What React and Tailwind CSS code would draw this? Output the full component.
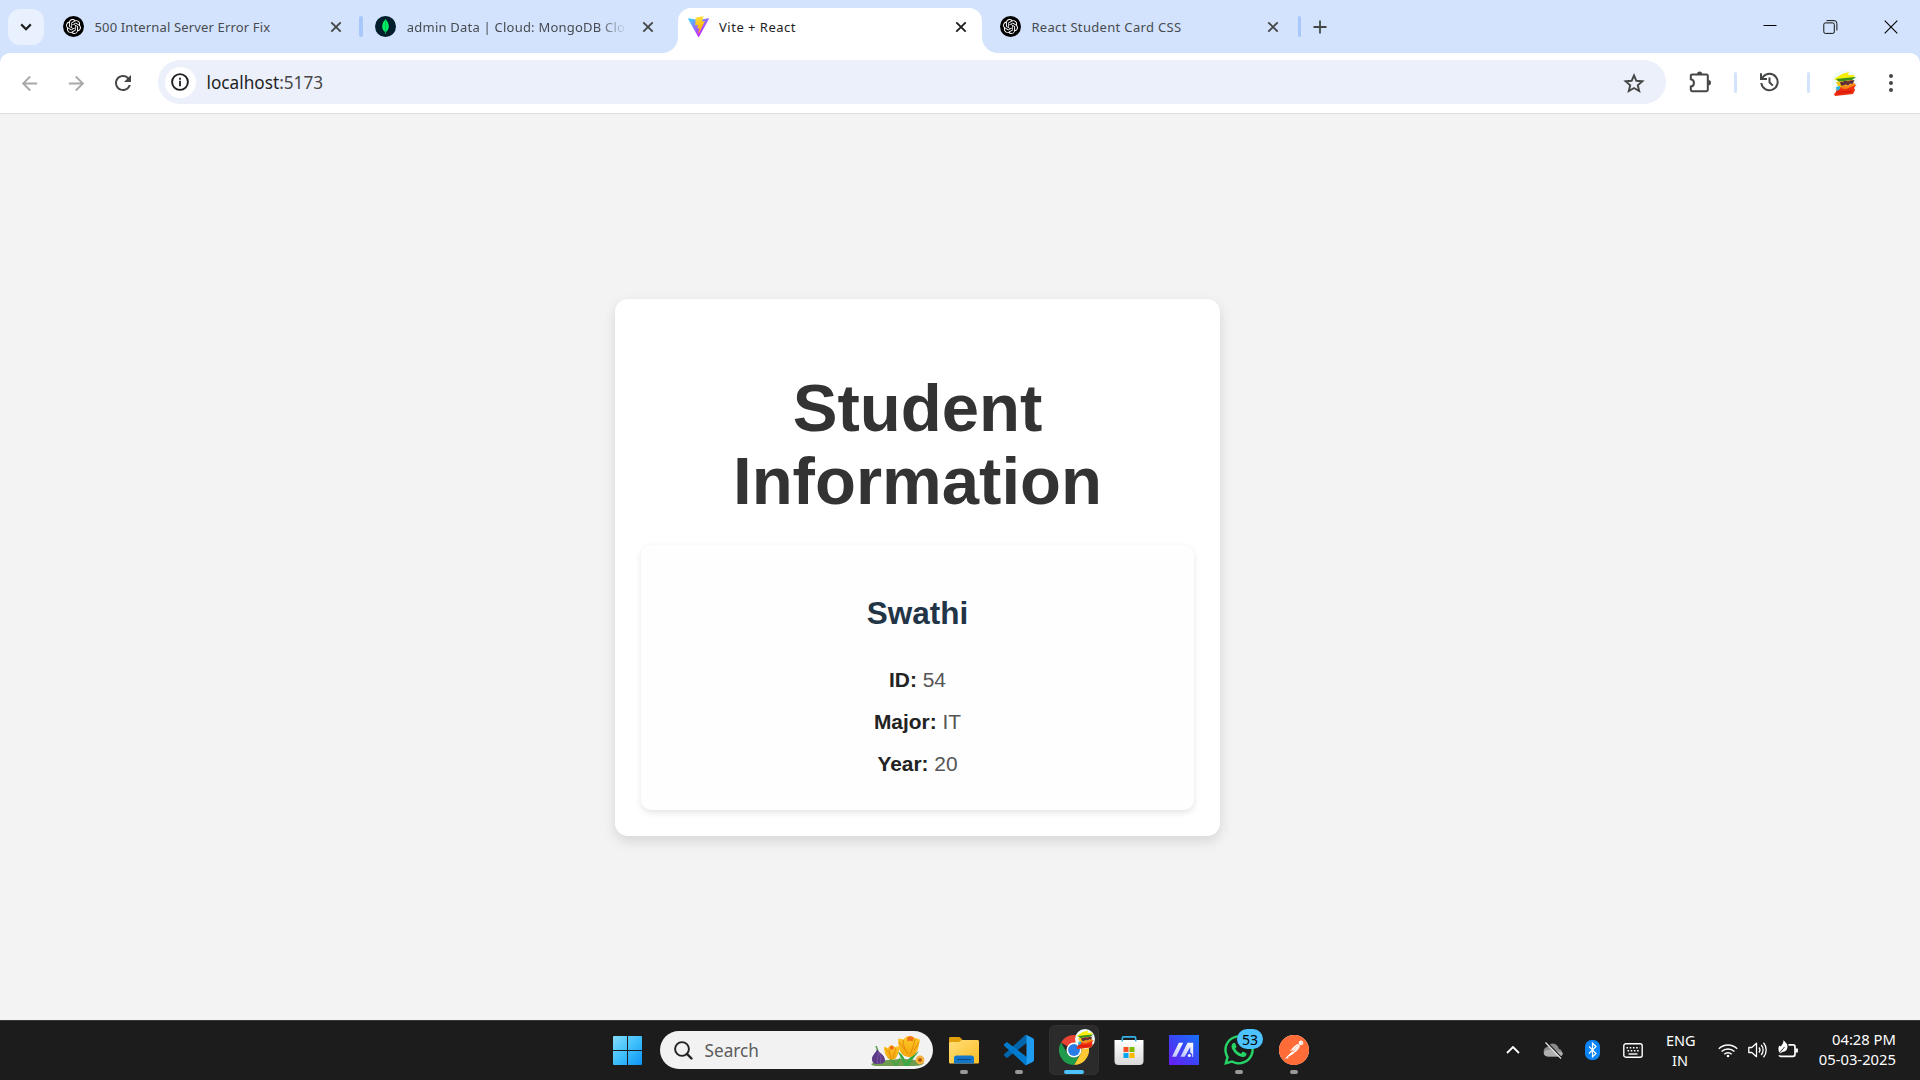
import React from "react";
import { SiOpenai, SiPostman } from "react-icons/si";
import { FaWhatsapp } from "react-icons/fa";
import { MdArrowBack, MdArrowForward, MdRefresh } from "react-icons/md";

function OpenAIMark() {
  return (
    <span className="flex size-[21px] items-center justify-center rounded-full bg-black">
      <SiOpenai className="size-[15px] text-white" />
    </span>
  );
}

function MongoMark() {
  return (
    <svg viewBox="0 0 21 21" className="size-[21px]">
      <circle cx="10.5" cy="10.5" r="10.5" fill="#001e2b" />
      <path d="M10.5 3C12.2 5.3 13.800 7.2 13.800 10.2c0 2.7-1.300 4.600-2.900 5.800l-.2 2h-.4l-.2-2C8.500 14.800 7.200 12.900 7.200 10.200 7.200 7.200 8.800 5.300 10.500 3Z" fill="#00ed64" />
      <path d="M10.500 4v14" stroke="#00a848" strokeWidth=".6" />
    </svg>
  );
}

function ViteMark() {
  return (
    <svg viewBox="0 0 256 257" className="size-[21px]">
      <defs>
        <linearGradient id="viteA" x1="-.828%" x2="57.636%" y1="7.652%" y2="78.411%">
          <stop offset="0%" stopColor="#41D1FF" />
          <stop offset="100%" stopColor="#BD34FE" />
        </linearGradient>
        <linearGradient id="viteB" x1="43.376%" x2="50.316%" y1="2.242%" y2="89.03%">
          <stop offset="0%" stopColor="#FFEA83" />
          <stop offset="8.333%" stopColor="#FFDD35" />
          <stop offset="100%" stopColor="#FFA800" />
        </linearGradient>
      </defs>
      <path fill="url(#viteA)" d="M255.153 37.938L134.897 252.976c-2.483 4.440-8.862 4.466-11.382.048L.875 37.958c-2.746-4.814 1.371-10.646 6.827-9.670l120.385 21.517a6.537 6.537 0 0 0 2.322-.004l117.867-21.483c5.438-.991 9.574 4.796 6.877 9.620Z" />
      <path fill="url(#viteB)" d="M185.432.063L96.440 17.501a3.268 3.268 0 0 0-2.634 3.014l-5.474 92.456a3.268 3.268 0 0 0 3.997 3.378l24.777-5.718c2.318-.535 4.413 1.507 3.936 3.838l-7.361 36.047c-.495 2.426 1.782 4.500 4.151 3.780l15.304-4.649c2.372-.720 4.652 1.360 4.150 3.788l-11.698 56.621c-.732 3.542 3.979 5.473 5.943 2.437l1.313-2.028l72.516-144.720c1.215-2.423-.880-5.186-3.540-4.672l-25.505 4.922c-2.396.462-4.435-1.770-3.759-4.114l16.646-57.705c.677-2.350-1.370-4.583-3.769-4.113Z" />
    </svg>
  );
}

function CloseX({ dark }) {
  return (
    <svg viewBox="0 0 12 12" className={dark ? "size-3 text-[#1f1f1f]" : "size-3 text-[#444746]"}>
      <path d="M1.300 1.300l9.400 9.400M10.700 1.300l-9.400 9.400" stroke="currentColor" strokeWidth="1.900" fill="none" />
    </svg>
  );
}

function Tab({ icon, title, active, fade, track }) {
  return (
    <div className="relative h-[53px] w-[312.3px] shrink-0">
      {active && (
        <div className="absolute inset-x-1 top-2 bottom-0 rounded-t-[13px] bg-white">
          <div className="absolute bottom-0 -left-4 size-4 bg-[radial-gradient(circle_at_0_0,transparent_15.5px,white_16.5px)]" />
          <div className="absolute -right-4 bottom-0 size-4 bg-[radial-gradient(circle_at_100%_0,transparent_15.5px,white_16.5px)]" />
        </div>
      )}
      <div className="relative flex h-[53px] items-center pl-[14px]">
        {icon}
        <div
          className={
            "ml-[10.5px] w-[218.5px] overflow-hidden text-[13px] leading-5 whitespace-nowrap " +
            track +
            (active ? " text-[#1f1f1f]" : " text-[#474b50]") +
            (fade ? " [mask-image:linear-gradient(to_right,black_88%,transparent_101%)]" : "")
          }
        >
          {title}
        </div>
        <div className="ml-[17px] flex w-3">
          <CloseX dark={active} />
        </div>
      </div>
    </div>
  );
}

function TabStrip() {
  return (
    <div className="relative flex h-[53px] items-center bg-[#d3e3fd]">
      <div className="ml-2 flex size-9 items-center justify-center rounded-xl bg-[#e9f1fe]">
        <svg viewBox="0 0 12 8" className="h-2 w-3">
          <path d="M1.200 1.400L6 6.200l4.800-4.800" stroke="#1f1f1f" strokeWidth="2.200" fill="none" />
        </svg>
      </div>
      <div className="ml-[5px] flex">
        <Tab icon={<OpenAIMark />} title="500 Internal Server Error Fix" track="tracking-[0.15px]" />
        <Tab icon={<MongoMark />} title="admin Data | Cloud: MongoDB Clo" fade track="tracking-[0.22px]" />
        <Tab icon={<ViteMark />} title="Vite + React" active track="tracking-[0.48px]" />
        <Tab icon={<OpenAIMark />} title="React Student Card CSS" track="tracking-[0.33px]" />
      </div>
      <div className="absolute top-4 left-[359px] h-[21px] w-1 rounded-sm bg-[#a8c7fa]" />
      <div className="-ml-[0.7px] h-[21px] w-[3px] rounded-sm bg-[#a8c7fa]" />
      <svg viewBox="0 0 14 14" className="ml-[12.500px] size-[14px]">
        <path d="M7 .5v13M.5 7h13" stroke="#444746" strokeWidth="1.800" />
      </svg>
      <div className="ml-auto flex h-[53px] items-center">
        <svg viewBox="0 0 14 14" className="mr-[46px] size-[14px]">
          <path d="M.5 5.500h13" stroke="#000" />
        </svg>
        <svg viewBox="0 0 15 14" className="mr-[46px] h-[14px] w-[15px]" fill="none" stroke="#111">
          <rect x=".8" y="2.900" width="10.500" height="10.500" rx="1.500" />
          <path d="M3.500.6h7.500a2.900 2.900 0 0 1 2.900 2.900v7" />
        </svg>
        <svg viewBox="0 0 14 14" className="mr-[22.5px] size-[14px]">
          <path d="M.7.7l12.600 12.600M13.300.7L.7 13.300" stroke="#000" strokeWidth="1.100" />
        </svg>
      </div>
    </div>
  );
}

/* Profile picture: a colourful scribble clipped to a circle. */
function Avatar({ className }) {
  return (
    <svg viewBox="0 0 26 26" className={className}>
      <circle cx="13" cy="13" r="13" fill="#effafc" />
      <path d="M2 9l8-5 7-2-1 3 7 0-3 4-14 2z" fill="#f7ee08" />
      <path d="M4 9l9-1 11-1-4 3-13 2z" fill="#3c8f1b" />
      <path d="M4 12l17-2 1 3-15 5z" fill="#f5c811" />
      <path d="M8 12l13-2 0 3-12 3z" fill="#7b3a20" />
      <path d="M9 12l2 3 2-4 3 4 3-4 1 3 2-4" stroke="#43205f" strokeWidth="1" fill="none" />
      <path d="M5 18l16-4 3 1-2 3 1 2-2 4-18 2-1-2 2-2z" fill="#ee3011" />
      <path d="M8 18l14-5 2 2-10 4z" fill="#f78b16" />
      <path d="M4 17l4-1v3l-3 2z" fill="#28b5dd" />
      <path d="M4 22l16-1M5 24l14-2" stroke="#d91509" strokeWidth=".9" />
    </svg>
  );
}

function HistoryIcon() {
  return (
    <svg viewBox="0 0 20 20" className="ml-[22.5px] size-5" fill="none" stroke="currentColor" strokeWidth="2">
      <path d="M2.300 11a8.200 8.200 0 1 0 1.700-6L2.600 6.500" />
      <path d="M2 1.300V7h6" />
      <path d="M10.500 5.400V10.300l3.300 3.300" />
    </svg>
  );
}

function Toolbar() {
  return (
    <div className="bg-[#d3e3fd]">
      <div className="flex h-[61px] items-center rounded-t-[10px] border-b border-[#dcdddd] bg-white pb-[2px] text-[#444746]">
        <MdArrowBack className="mt-[2px] ml-[17.5px] size-[23px] text-[#a9a9a9]" />
        <MdArrowForward className="mt-[2px] ml-6 size-[23px] text-[#a9a9a9]" />
        <MdRefresh className="mt-[2px] ml-[23px] size-6" />
        <div className="ml-[23px] flex h-11 w-[1508px] items-center rounded-full bg-[#ecf0fa] pl-[7px]">
          <div className="flex size-[31px] items-center justify-center rounded-full bg-white">
            <svg viewBox="0 0 18 18" className="size-[18px]">
              <circle cx="9" cy="9" r="7.900" fill="none" stroke="#1f1f1f" strokeWidth="1.900" />
              <path d="M9 7.800v5.400M9 4.800v1.900" stroke="#1f1f1f" strokeWidth="1.800" />
            </svg>
          </div>
          <div className="mt-[2px] ml-[11px] text-[17.2px] leading-6 text-[#1f1f1f]">
            localhost<span className="text-[#474747]">:5173</span>
          </div>
          <svg viewBox="0 0 24 24" className="mt-[2px] mr-[20px] ml-auto size-6" fill="none">
            <path d="M12 4.300l2.350 5.500 6 .5-4.550 3.950 1.400 5.850L12 17l-5.200 3.100 1.400-5.850-4.550-3.950 6-.5z" stroke="currentColor" strokeWidth="1.900" />
          </svg>
        </div>
        <svg viewBox="0 0 22 22" className="mb-px ml-[23px] size-[22px]" fill="none">
          <path d="M3.200 3.400h14.200a1.400 1.400 0 0 1 1.400 1.400v14a1.400 1.400 0 0 1-1.400 1.400H3.200a1.400 1.400 0 0 1-1.400-1.400V15.500c4.200-.5 4.200-6.700 0-7.200V4.800a1.400 1.400 0 0 1 1.400-1.400z" stroke="currentColor" strokeWidth="2" />
          <path d="M8 3a2.600 2.600 0 0 1 5.200 0zM19.300 9a2.700 2.700 0 0 1 0 5.400z" fill="currentColor" />
        </svg>
        <div className="ml-[23px] h-[21px] w-[3px] rounded-sm bg-[#d3e3fd]" />
        <HistoryIcon />
        <div className="ml-[28px] h-[21px] w-[3px] rounded-sm bg-[#d3e3fd]" />
        <Avatar className="mt-[2px] ml-[21.500px] size-[26px]" />
        <svg viewBox="0 0 4 18" className="mt-[2px] ml-[31.500px] h-[18px] w-1" fill="currentColor">
          <circle cx="2" cy="2" r="2" />
          <circle cx="2" cy="9" r="2" />
          <circle cx="2" cy="16" r="2" />
        </svg>
      </div>
    </div>
  );
}

const student = { name: "Swathi", fields: [["ID:", "54"], ["Major:", "IT"], ["Year:", "20"]] };

function StudentPage() {
  return (
    <main className="flex h-[906px] items-start justify-center bg-[#f3f3f3] pt-[185px] pr-[85px] font-['Liberation_Sans',Arial,sans-serif]">
      <section className="h-[537px] w-[605px] rounded-[13px] bg-white px-[26px] pt-[72px] text-center shadow-[0_5px_13px_rgba(0,0,0,0.12)]">
        <h1 className="h-[174px] text-[67.1px] leading-[73px] font-bold text-[#333]">
          Student
          <br />
          Information
        </h1>
        <div className="h-[265px] rounded-[10px] bg-[#fefefe] pt-[49px] shadow-[0_2.600px_6.500px_rgba(0,0,0,0.1)]">
          <h2 className="text-[31.5px] leading-[38px] font-bold text-[#213547]">{student.name}</h2>
          <div className="mt-[27px]">
            {student.fields.map(([label, value]) => (
              <p key={label} className="text-[20.9px] leading-[42px] text-[#555]">
                <strong className="font-bold text-[#222]">{label}</strong> {value}
              </p>
            ))}
          </div>
        </div>
      </section>
    </main>
  );
}

function Flowers() {
  return (
    <svg viewBox="0 0 54 32" className="h-8 w-[54px]">
      <defs>
        <linearGradient id="petal" x1="0" x2="0" y1="0" y2="1">
          <stop offset="0" stopColor="#ffc928" />
          <stop offset="1" stopColor="#f4a60c" />
        </linearGradient>
      </defs>
      <path d="M0 29c6-4 18-4 30-5 10 0 18 1 23 4-2 3-8 3-14 3H8c-4 0-7 0-8-2z" fill="#6f9b4f" />
      <path d="M24 31c-1-4-6-7-8-9 5 1 8 4 9 8 1-4 3-7 5-8-1 3-3 6-4 9zM33 31c-1-6-5-12-7-15 5 2 8 8 9 12 2-5 8-9 13-12-3 5-8 9-10 15z" fill="#39a845" />
      <path d="M5 11l2 5" stroke="#58a651" strokeWidth="1.600" />
      <path d="M6 14c1 3 8 6 8 11 0 3-3 4-7 4s-6-1-6-5c0-4 4-6 5-10z" fill="#5d3a86" />
      <path d="M7 17c1 4-2 8 0 12M8 18c3 4 2 8 1 11" stroke="#8a66ad" strokeWidth=".7" fill="none" />
      <path d="M13 12c2-.5 3 1 4 1 1-2 3-3 4-3 1 1 2 2 4 2 1-1 3-1 4 0-1 4-2 8-4 11-2 2-6 2-8 0-3-3-4-7-4-11z" fill="url(#petal)" />
      <path d="M18 14l2 10M25 13l-3 10M14 13l5 6" stroke="#e38707" strokeWidth=".8" />
      <path d="M18.500 12l2.500-1.500 2 1.500-1 2.500h-2.500z" fill="#f06a18" />
      <path d="M27 4c3-1 5 1 6 0 1-2 3-3 6-3 3 0 4 2 5 2 2 0 4 1 5 2-1 3-1 6-2 9-2 5-5 8-9 8-5 0-9-4-10-9-.5-3-1-6-1-9z" fill="url(#petal)" />
      <path d="M32 5c0 5 2 10 5 14M44 4c-1 6-3 11-5 15M28 7l6 8M48 7l-5 8" stroke="#df8308" strokeWidth=".9" fill="none" />
      <path d="M36 2.500l3-1.500 4 1.500-1.500 4-2.500-1-2.500 1z" fill="#f27018" />
      <circle cx="49" cy="25" r="4.400" fill="#f3a72e" />
      <circle cx="49" cy="25" r="1.800" fill="#a95514" />
      <circle cx="49" cy="25" r="3.400" fill="none" stroke="#ffcd62" strokeDasharray="1.500 1" />
    </svg>
  );
}

function Folder() {
  return (
    <svg viewBox="0 0 30 30" className="size-[30px]">
      <defs>
        <linearGradient id="fold" x1="0" y1="0" x2="1" y2="1">
          <stop offset="0" stopColor="#ffe07a" />
          <stop offset="1" stopColor="#fcbc25" />
        </linearGradient>
      </defs>
      <path d="M0 3.500C0 2.500.7 2 1.500 2h8c1 0 1.500.3 2.200 1l1.800 2H28c1.300 0 2 .8 2 2v6H0z" fill="#e0a00c" />
      <path d="M0 9c0-1.200.8-2 2-2h8l3-2h15.300c1 0 1.700.8 1.700 1.700V27c0 1-.6 1.500-1.500 1.500h-27C.6 28.500 0 28 0 27z" fill="url(#fold)" />
      <path d="M5 28.500V23c0-1.500 1-2.500 2.500-2.500h15c1.500 0 2.500 1 2.500 2.500v5.500z" fill="#1477c9" />
      <path d="M8.500 24.500h13" stroke="#0a4a85" strokeWidth="1.200" />
    </svg>
  );
}

function VSCode() {
  return (
    <svg viewBox="0 0 100 100" className="size-[30px]">
      <path fill="#0065A9" d="M96.461 10.796L75.857.876C73.472-.273 70.622.212 68.750 2.083L1.299 63.583c-1.815 1.654-1.813 4.511.004 6.162l5.510 5.009c1.485 1.350 3.722 1.450 5.321.237L93.361 13.370C96.086 11.303 100 13.246 100 16.667v-.240c0-2.401-1.375-4.589-3.539-5.631Z" />
      <path fill="#007ACC" d="M96.461 89.204L75.857 99.125c-2.385 1.148-5.235.663-7.107-1.208L1.299 36.417c-1.815-1.654-1.813-4.511.004-6.162l5.510-5.009c1.485-1.350 3.722-1.450 5.321-.237L93.361 86.630C96.086 88.697 100 86.754 100 83.333v.240c0 2.401-1.375 4.589-3.539 5.631Z" />
      <path fill="#1F9CF0" d="M75.858 99.126c-2.386 1.148-5.236.662-7.108-1.210C71.056 100.223 75 98.590 75 95.328V4.672c0-3.262-3.944-4.895-6.250-2.589C70.622.211 73.472-.274 75.858.874l20.601 9.907C98.623 11.822 100 14.011 100 16.413v67.174c0 2.402-1.377 4.592-3.541 5.633L75.858 99.126Z" />
    </svg>
  );
}

function Chrome() {
  return (
    <svg viewBox="0 0 48 48" className="size-[30px]">
      <path d="M24 24L3.215 12A24 24 0 0 1 44.785 12H24z" fill="#ea4335" />
      <path d="M44.785 12A24 24 0 0 1 24 48l10.392-18A12 12 0 0 0 34.400 18L24 12z" fill="#fcc934" />
      <path d="M3.215 12A24 24 0 0 0 24 48l10.392-18A12 12 0 0 1 13.608 30z" fill="#1e9b4b" />
      <circle cx="24" cy="24" r="12" fill="#fff" />
      <circle cx="24" cy="24" r="9.500" fill="#2a7de8" />
    </svg>
  );
}

function Store() {
  return (
    <svg viewBox="0 0 30 30" className="size-[30px]">
      <defs>
        <linearGradient id="bag" x1="0" y1="0" x2="0" y2="1">
          <stop offset="0" stopColor="#fff" />
          <stop offset="1" stopColor="#d9d9d9" />
        </linearGradient>
      </defs>
      <path d="M.5 5h29v21a4 4 0 0 1-4 4h-21a4 4 0 0 1-4-4z" fill="url(#bag)" />
      <path d="M8.300 6.500V3.200c0-.8.500-1.300 1.300-1.300h10.800c.8 0 1.300.5 1.300 1.300v3.300" fill="none" stroke="#35b1e8" strokeWidth="1.600" />
      <path d="M9.500 12h5v5h-5z" fill="#f25022" />
      <path d="M15.500 12h5v5h-5z" fill="#7fba00" />
      <path d="M9.500 18h5v5h-5z" fill="#00a4ef" />
      <path d="M15.500 18h5v5h-5z" fill="#ffb900" />
    </svg>
  );
}

function MyAsus() {
  return (
    <svg viewBox="0 0 30 30" className="size-[30px]">
      <defs>
        <linearGradient id="asus" x1="0" y1="1" x2="1" y2="0">
          <stop offset="0" stopColor="#6a1df2" />
          <stop offset=".5" stopColor="#3b45f5" />
          <stop offset="1" stopColor="#1673f8" />
        </linearGradient>
        <linearGradient id="slash" x1="0" y1="1" x2="1" y2="0">
          <stop offset="0" stopColor="#b9c2ff" />
          <stop offset="1" stopColor="#fff" />
        </linearGradient>
      </defs>
      <path d="M0 0h30v30H0z" fill="url(#asus)" />
      <path d="M3 21.800L9.800 7.800h4.400L7.200 21.800z" fill="url(#slash)" />
      <path d="M11.500 21.800L18.500 7.800h5.700v14h-1.400a2.500 2.500 0 0 0-1.600-4V12l-5.500 9.800z" fill="url(#slash)" />
      <circle cx="20.300" cy="20.500" r="1.500" fill="#fff" />
    </svg>
  );
}

function TaskItem({ children, running, active }) {
  return (
    <div
      className={
        "relative mr-[5px] flex size-[50px] shrink-0 items-center justify-center rounded-md " +
        (active ? "bg-[#2b2b2b] ring-1 ring-[#303030] ring-inset" : "")
      }
    >
      {children}
      {running && <span className="absolute bottom-px left-[21px] h-1 w-2 rounded-full bg-[#9a9a9a]" />}
      {active && <span className="absolute bottom-px left-[15px] h-1 w-5 rounded-full bg-[#4cc2ff]" />}
    </div>
  );
}

function Taskbar() {
  return (
    <footer className="flex h-[60px] items-center border-t border-[#373a38] bg-[#1c1c1c] pb-px text-white">
      <svg viewBox="0 0 29 29" className="ml-[613px] size-[29px]">
        <defs>
          <linearGradient id="win" gradientUnits="userSpaceOnUse" x1="0" y1="0" x2="29" y2="29">
            <stop offset="0" stopColor="#84dcfb" />
            <stop offset=".5" stopColor="#3fc0fb" />
            <stop offset="1" stopColor="#0b93f6" />
          </linearGradient>
        </defs>
        <path d="M0 1a1 1 0 0 1 1-1h13v14H0zM15 0h13a1 1 0 0 1 1 1v13H15zM0 15h14v14H1a1 1 0 0 1-1-1zM15 15h14v13a1 1 0 0 1-1 1H15z" fill="url(#win)" />
      </svg>
      <div className="ml-[18px] flex h-[38px] w-[273px] items-center rounded-full bg-[#f2f2f2] pl-[14px]">
        <svg viewBox="0 0 19 19" className="size-[19px]" fill="none" stroke="#222">
          <circle cx="8" cy="8" r="6.900" strokeWidth="1.900" />
          <path d="M12.900 12.900l4.600 4.600" strokeWidth="2.400" strokeLinecap="round" />
        </svg>
        <span className="mt-[2px] ml-[11.500px] text-[17.2px] leading-6 text-[#5c5c5c]">Search</span>
        <div className="mt-[2px] mr-2 ml-auto">
          <Flowers />
        </div>
      </div>
      <div className="ml-[6px] flex">
        <TaskItem running><Folder /></TaskItem>
        <TaskItem running><VSCode /></TaskItem>
        <TaskItem active>
          <Chrome />
          <Avatar className="absolute top-1 left-[26px] size-5" />
        </TaskItem>
        <TaskItem><Store /></TaskItem>
        <TaskItem><MyAsus /></TaskItem>
        <TaskItem running>
          <FaWhatsapp className="size-[34px] shrink-0 text-[#25d366]" />
          <span className="absolute top-1 left-[23px] flex h-5 w-[26px] items-center justify-center rounded-full bg-[#4cc2ff] text-[14px] text-black">
            53
          </span>
        </TaskItem>
        <TaskItem running>
          <span className="rounded-full bg-white">
            <SiPostman className="size-[30px] text-[#ff6c37]" />
          </span>
        </TaskItem>
      </div>
      <div className="ml-auto flex items-center pr-6">
        <svg viewBox="0 0 14 8" className="mr-[23px] h-2 w-[14px]">
          <path d="M1 7l6-6 6 6" stroke="#fff" strokeWidth="1.800" fill="none" />
        </svg>
        <svg viewBox="0 0 20 18" className="mr-[22px] h-[18px] w-5">
          <path d="M5 15.500a5 5 0 0 1-.5-9.800 6 6 0 0 1 11.200 2 4 4 0 0 1 .3 7.800z" fill="#8a8a8a" />
          <path d="M1 11c3-3 6-3 9-1l9 1c2 2 0 4.500-3 4.500H5c-3 0-5-2-4-4.500z" fill="#b0b0b0" />
          <path d="M3.700 1l15.500 16.500" stroke="#1c1c1c" strokeWidth="1.500" />
          <path d="M2.500 1.500l15.500 16" stroke="#e8e8e8" strokeWidth="1.200" />
        </svg>
        <svg viewBox="0 0 15 20" className="mr-[23px] h-5 w-[15px]">
          <rect width="15" height="20" rx="6.500" fill="#0a84f7" />
          <path d="M4 6.500l7 7-3.500 3.300V3.200L11 6.500l-7 7" fill="none" stroke="#fff" strokeWidth="1.200" />
        </svg>
        <svg viewBox="0 0 20 15" className="mr-[23px] h-[15px] w-5" fill="none" stroke="#fff">
          <rect x=".8" y=".8" width="18.400" height="13.400" rx="2" strokeWidth="1.400" />
          <path d="M3.500 4.800h13M4.500 7.700h12" strokeWidth="1.600" strokeDasharray="1.600 1.600" />
          <path d="M5.500 11h9" strokeWidth="1.400" />
        </svg>
        <div className="mr-6 w-7 text-center text-[14.5px] leading-5 whitespace-nowrap">
          ENG
          <br />
          IN
        </div>
        <svg viewBox="0 0 20 15" className="mr-[10px] h-[15px] w-5" fill="none" stroke="#fff" strokeWidth="1.400">
          <path d="M.8 5.800a13 13 0 0 1 18.400 0M3.600 8.600a9 9 0 0 1 12.800 0M6.300 11.300a5.200 5.200 0 0 1 7.400 0" />
          <circle cx="10" cy="13" r="1.300" fill="#fff" stroke="none" />
        </svg>
        <svg viewBox="0 0 20 18" className="mr-[10px] h-[18px] w-5" fill="none" stroke="#fff" strokeWidth="1.300">
          <path d="M.8 6.500h3L8.500 2.300v13.400L3.800 11.500h-3z" strokeLinejoin="round" />
          <path d="M11 6.500a4 4 0 0 1 0 5M13.200 4a7.500 7.500 0 0 1 0 10M15.500 1.800a11 11 0 0 1 0 14.400" />
        </svg>
        <svg viewBox="0 0 20 18" className="mr-[18px] mb-[2px] h-[18px] w-5" fill="none" stroke="#fff">
          <path d="M10.500 4.800H15a2 2 0 0 1 2 2v7.500a2 2 0 0 1-2 2H2.500a1.500 1.500 0 0 1-1.300-1" strokeWidth="1.700" />
          <path d="M18.700 8.500v4" strokeWidth="2.400" />
          <path d="M5.500 0c1 2 4 3 4 6.500 0 3.500-2 5-5 5.500L2 13.500C0 11 0 7 1.500 5.500c.500 1 1 1 1.500.5C4.500 4.500 5.500 3 5.500 0z" fill="#fff" stroke="none" />
          <path d="M1.500 13l5-6" stroke="#1c1c1c" strokeWidth=".9" />
        </svg>
        <div className="mb-[2px] w-20 text-right text-[14.8px] leading-5 whitespace-nowrap">
          04:28 PM
          <br />
          05-03-2025
        </div>
      </div>
    </footer>
  );
}

export default function App() {
  return (
    <div className="h-[1080px] w-[1920px] overflow-hidden font-['Noto_Sans','Open_Sans',sans-serif]">
      <TabStrip />
      <Toolbar />
      <StudentPage />
      <Taskbar />
    </div>
  );
}
